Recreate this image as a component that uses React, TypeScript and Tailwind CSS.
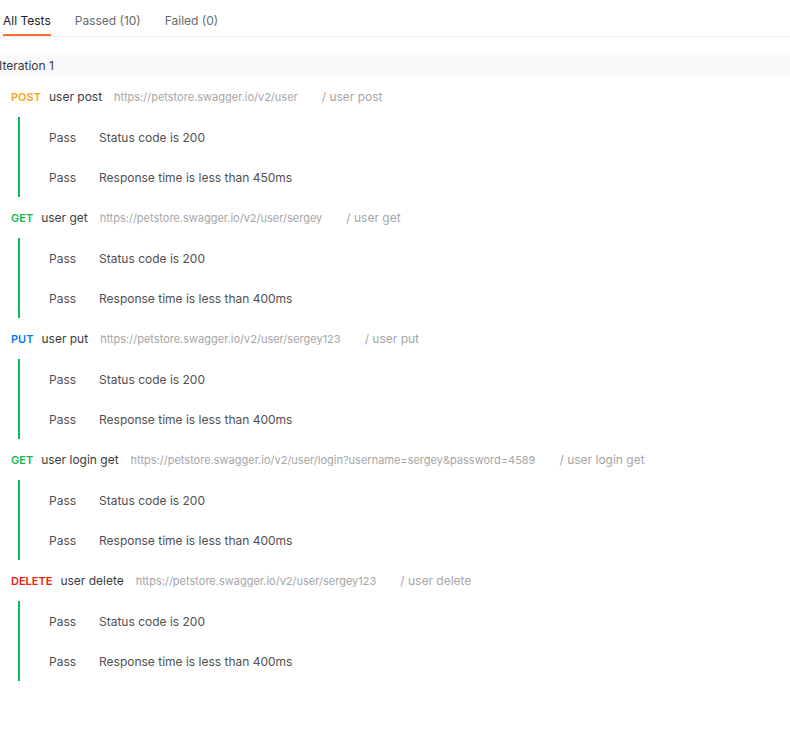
const requests = [
  {
    method: "POST",
    color: "text-[#f5a623]",
    name: "user post",
    url: "https://petstore.swagger.io/v2/user",
    tests: ["Status code is 200", "Response time is less than 450ms"],
  },
  {
    method: "GET",
    color: "text-[#0cbb52]",
    name: "user get",
    url: "https://petstore.swagger.io/v2/user/sergey",
    tests: ["Status code is 200", "Response time is less than 400ms"],
  },
  {
    method: "PUT",
    color: "text-[#097bed]",
    name: "user put",
    url: "https://petstore.swagger.io/v2/user/sergey123",
    tests: ["Status code is 200", "Response time is less than 400ms"],
  },
  {
    method: "GET",
    color: "text-[#0cbb52]",
    name: "user login get",
    url: "https://petstore.swagger.io/v2/user/login?username=sergey&password=4589",
    tests: ["Status code is 200", "Response time is less than 400ms"],
  },
  {
    method: "DELETE",
    color: "text-[#eb2013]",
    name: "user delete",
    url: "https://petstore.swagger.io/v2/user/sergey123",
    tests: ["Status code is 200", "Response time is less than 400ms"],
  },
];

const tabs = ["All Tests", "Passed (10)", "Failed (0)"];

export default function App() {
  return (
    <div className="h-[751px] w-[790px] overflow-hidden bg-white font-['Inter',sans-serif] text-[12px] leading-4 text-[#212121]">
      <div className="flex gap-6 border-b border-[#ededed] pl-[3px]">
        {tabs.map((t, i) => (
          <div
            key={t}
            className={
              i === 0
                ? "border-b-2 border-[#ff6c37] pb-[5px] pt-[13px] text-[#212121]"
                : "border-b-2 border-transparent pb-[5px] pt-[13px] text-[#6b6b6b]"
            }
          >
            {t}
          </div>
        ))}
      </div>

      <div className="mt-4 flex h-6 items-center bg-[#f9f9f9] pt-px text-[#3b3b3b]">
        <span className="-ml-px">Iteration 1</span>
      </div>

      {requests.map((r, i) => (
        <div key={i} className="pb-px pt-2">
          <div className="flex h-6 items-center pl-[11px]">
            <span className={`text-[11px] font-semibold ${r.color}`}>{r.method}</span>
            <span className="ml-2 text-[#3b3b3b]">{r.name}</span>
            <span className="ml-3 text-[11px] text-[#a6a6a6]">{r.url}</span>
            <span className="ml-6 text-[#a6a6a6]">/ {r.name}</span>
          </div>
          <div className="ml-[18px] mt-2 border-l-2 border-[#0cbb52]">
            {r.tests.map((t) => (
              <div key={t} className="flex h-10 items-center pl-[29px] pt-px text-[#505050]">
                <span className="w-[50px]">Pass</span>
                <span>{t}</span>
              </div>
            ))}
          </div>
        </div>
      ))}
    </div>
  );
}
